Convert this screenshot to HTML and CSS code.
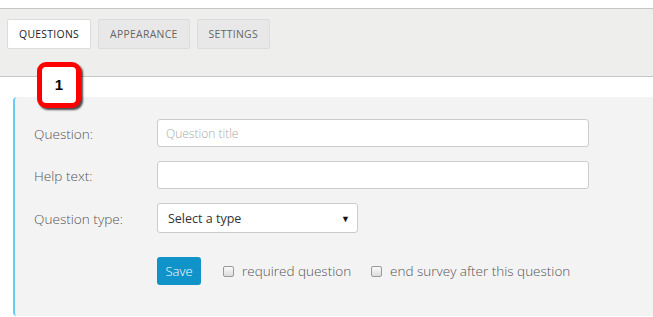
FILE: index.html
```html
<!DOCTYPE html>
<html lang="en">
<head>
  <meta charset="UTF-8">
  <title>Question editor</title>
  <link rel="stylesheet" href="styles.css">
</head>
<body>

  <div class="tabbar">
    <a href="#" class="tab active">Questions</a>
    <a href="#" class="tab">Appearance</a>
    <a href="#" class="tab">Settings</a>
  </div>

  <div class="badge">1</div>

  <div class="panel">
    <form class="qform">
      <label class="lbl" for="q-title">Question:</label>
      <input class="field" id="q-title" type="text" placeholder="Question title">

      <label class="lbl" for="q-help">Help text:</label>
      <input class="field" id="q-help" type="text">

      <label class="lbl" for="q-type">Question type:</label>
      <div class="select" id="q-type">Select a type <span class="caret">&#9660;</span></div>

      <div class="actions">
        <button type="button" class="save-btn">Save</button>
        <label class="check"><span class="box"></span> required question</label>
        <label class="check"><span class="box"></span> end survey after this question</label>
      </div>
    </form>
  </div>

</body>
</html>
```

FILE: styles.css
```css
body {
  margin: 0;
  padding-top: 8px;
  font-family: "Open Sans", "Liberation Sans", sans-serif;
  background: #fff;
  color: #555;
}

.tabbar {
  display: flex;
  gap: 7px;
  height: 57px;
  padding: 10px 0 0 7px;
  background: #eeeeec;
  border-top: 1px solid #c6c6c6;
  border-bottom: 1px solid #c6c6c6;
}

.tab {
  display: flex;
  align-items: center;
  height: 28px;
  padding: 0 11px;
  border: 1px solid #dcdcdc;
  border-radius: 2px;
  background: #e8e8e8;
  color: #666;
  font-size: 10.4px;
  letter-spacing: 0.3px;
  text-transform: uppercase;
  text-decoration: none;
}

.tab.active {
  background: #fff;
  color: #222;
  padding: 0 11px;
}

.badge {
  position: absolute;
  left: 37px;
  top: 62px;
  width: 34px;
  height: 36px;
  border: 5px solid #f00;
  border-radius: 9px;
  background: #fff;
  box-shadow: 2px 2px 2px rgba(0,0,0,0.7);
  color: #000;
  font-family: "Liberation Sans", sans-serif;
  font-weight: bold;
  font-size: 15px;
  line-height: 36px;
  text-align: center;
  z-index: 2;
}

.panel {
  box-sizing: border-box;
  margin: 20px 0 0 13px;
  height: 219px;
  padding: 22px 0 0 19px;
  background: #f3f3f3;
  border-left: 2px solid #66ccf6;
  border-radius: 4px 0 0 4px;
}

.qform {
  display: grid;
  grid-template-columns: 123px 432px;
  row-gap: 14px;
  align-items: center;
}

.lbl {
  font-size: 13.6px;
  font-weight: 300;
  color: #555;
}

.field {
  box-sizing: border-box;
  height: 28px;
  margin: 0;
  padding: 0 8px;
  border: 1px solid #ccc;
  border-radius: 3px;
  background: #fff;
  font-family: inherit;
  font-size: 12px;
  font-weight: 300;
}

.field::placeholder {
  color: #aaa;
}

.select {
  box-sizing: border-box;
  display: flex;
  align-items: center;
  justify-content: space-between;
  width: 201px;
  height: 30px;
  padding: 0 7px 0 10px;
  border: 1px solid #ccc;
  border-radius: 3px;
  background: #fff;
  color: #333;
  font-size: 12.5px;
}

.caret {
  font-size: 9px;
  color: #111;
}

.actions {
  grid-column: 2;
  display: flex;
  align-items: center;
  margin-top: 10px;
  white-space: nowrap;
}

.save-btn {
  flex: none;
  height: 28px;
  width: 44px;
  padding: 0;
  margin-right: 22px;
  border: none;
  border-radius: 3px;
  background: #0f93c9;
  color: #fff;
  font-family: inherit;
  font-size: 13px;
  font-weight: 300;
}

.check {
  flex: none;
  display: flex;
  align-items: center;
  gap: 8px;
  margin-right: 20px;
  font-size: 13.5px;
  font-weight: 300;
  color: #555;
}

.box {
  display: inline-block;
  box-sizing: border-box;
  width: 11px;
  height: 11px;
  border: 1px solid #999;
  border-radius: 2px;
  background: linear-gradient(#fafafa, #dcdcdc);
}
```
